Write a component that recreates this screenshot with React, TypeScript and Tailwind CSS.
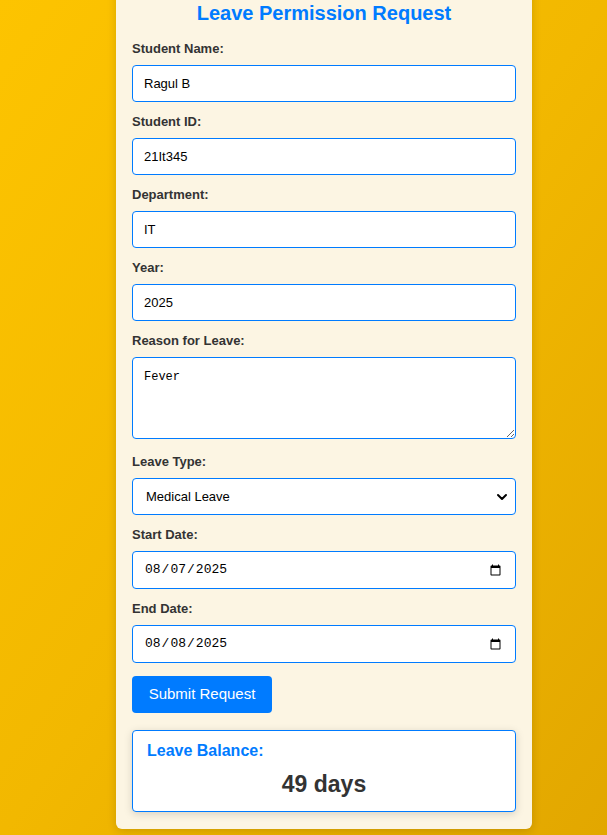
import React, { useState } from "react";

const inputCls =
  "block w-full h-[37px] px-[11px] rounded-[4px] border border-[#007bff] bg-white text-[13px] text-black outline-none";

const monoFont = { fontFamily: '"Liberation Mono", "DejaVu Sans Mono", monospace' };

function Field({
  label,
  extra = "",
  children,
}: {
  label: string;
  extra?: string;
  children: React.ReactNode;
}) {
  return (
    <div className={"mb-[11px] " + extra}>
      <label className="block mb-[8px] text-[13px] leading-[17px] font-bold text-[#333]">{label}</label>
      {children}
    </div>
  );
}

export default function App() {
  const [name, setName] = useState("Ragul B");
  const [id, setId] = useState("21It345");
  const [dept, setDept] = useState("IT");
  const [year, setYear] = useState("2025");
  const [reason, setReason] = useState("Fever");
  const [type, setType] = useState("Medical Leave");
  const [start, setStart] = useState("2025-08-07");
  const [end, setEnd] = useState("2025-08-08");

  return (
    <div
      className="min-h-[835px] w-full overflow-hidden bg-gradient-to-br from-[#fdc400] via-[#f2b800] to-[#e2a700]"
      style={{ fontFamily: '"Liberation Sans", Arial, sans-serif' }}
    >
      <div className="ml-[116px] mt-[-16px] w-[416px] rounded-[6px] bg-[#fcf5e3] px-[16px] pt-[18px] pb-[17px] shadow-[0_2px_10px_rgba(0,0,0,0.15)]">
        <h2 className="text-center text-[20px] leading-[23px] font-bold text-[#007bff] mb-[15px]">
          Leave Permission Request
        </h2>

        <Field label="Student Name:">
          <input className={inputCls} value={name} onChange={(e) => setName(e.target.value)} />
        </Field>
        <Field label="Student ID:">
          <input className={inputCls} value={id} onChange={(e) => setId(e.target.value)} />
        </Field>
        <Field label="Department:">
          <input className={inputCls} value={dept} onChange={(e) => setDept(e.target.value)} />
        </Field>
        <Field label="Year:">
          <input className={inputCls} value={year} onChange={(e) => setYear(e.target.value)} />
        </Field>
        <Field label="Reason for Leave:" extra="pb-[3px]">
          <textarea
            className="block w-full h-[82px] px-[11px] pt-[11px] pb-[9px] rounded-[4px] border border-[#007bff] bg-white text-[12px] leading-[16px] text-black outline-none"
            style={monoFont}
            value={reason}
            onChange={(e) => setReason(e.target.value)}
          />
        </Field>
        <Field label="Leave Type:">
          <div className="relative">
            <select
              className="block w-full h-[37px] pl-[13px] pr-[30px] rounded-[4px] border border-[#007bff] bg-white text-[13px] text-black outline-none appearance-none"
              value={type}
              onChange={(e) => setType(e.target.value)}
            >
              <option>Medical Leave</option>
              <option>Casual Leave</option>
              <option>On Duty</option>
            </select>
            <svg
              className="pointer-events-none absolute right-[8px] top-1/2 -translate-y-1/2"
              width="12"
              height="12"
              viewBox="0 0 12 12"
              fill="none"
            >
              <path d="M2 4l4 4 4-4" stroke="#000" strokeWidth="2" strokeLinecap="round" strokeLinejoin="round" />
            </svg>
          </div>
        </Field>
        <Field label="Start Date:">
          <input
            type="date"
            className={inputCls + " !h-[38px]"}
            style={monoFont}
            value={start}
            onChange={(e) => setStart(e.target.value)}
          />
        </Field>
        <Field label="End Date:">
          <input
            type="date"
            className={inputCls + " !h-[38px]"}
            style={monoFont}
            value={end}
            onChange={(e) => setEnd(e.target.value)}
          />
        </Field>

        <button className="mt-[2px] h-[37px] w-[140px] rounded-[4px] bg-[#007bff] text-[15px] text-white">
          Submit Request
        </button>

        <div className="mt-[17px] h-[82px] rounded-[4px] border border-[#007bff] bg-white px-[14px] pt-[10px] shadow-[0_2px_8px_rgba(0,0,0,0.15)]">
          <h3 className="text-[16px] leading-[20px] font-bold text-[#007bff]">Leave Balance:</h3>
          <p className="mt-[10px] text-center text-[23px] leading-[27px] font-bold text-[#333]">49 days</p>
        </div>
      </div>
    </div>
  );
}
